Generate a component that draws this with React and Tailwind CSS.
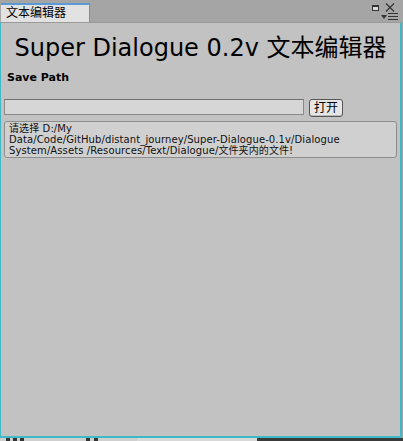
import React from "react"

const font = { fontFamily: '"DejaVu Sans", "Noto Sans CJK SC", sans-serif' }

export default function App() {
    return (
        <div className="w-[403px] h-[441px] bg-[#a5a5a5] flex flex-col overflow-hidden" style={font}>
            {/* TAB BAR */}
            <div className="h-[22px] flex items-end relative">
                <div className="w-[89px] h-[19px] ml-[1px] bg-[#e2e2e2] border-t-2 border-[#5b9bd5] border-r border-r-[#8a8a8a] text-[12px] text-black leading-[17px] pl-[5px]">
                    文本编辑器
                </div>
                <div className="absolute right-[8px] top-[3px] flex items-center gap-[6px]">
                    <div className="w-[7px] h-[6px] border border-[#333] border-t-2 bg-[#ddd]"></div>
                    <svg width="10" height="9" viewBox="0 0 10 9">
                        <path d="M1 0.5 L9 8.5 M9 0.5 L1 8.5" stroke="#333" strokeWidth="1.2" />
                    </svg>
                </div>
                <div className="absolute right-[5px] top-[13px] flex items-center gap-[1px]">
                    <svg width="6" height="4" viewBox="0 0 6 4"><path d="M0 0 H6 L3 4Z" fill="#333" /></svg>
                    <svg width="10" height="7" viewBox="0 0 10 7">
                        <path d="M0 0.5H10M0 3.5H10M0 6.5H10" stroke="#333" strokeWidth="1" />
                    </svg>
                </div>
            </div>

            {/* PANEL */}
            <div className="flex-1 flex flex-col bg-[#c2c2c2] border-l border-b-2 border-r-2 border-[#3fb8c8] border-t border-t-[#9a9a9a] mr-[1px]">
                <h1 className="text-center text-[24px] whitespace-nowrap text-black mt-[10px] leading-[30px]">
                    Super Dialogue 0.2v 文本编辑器
                </h1>
                <div className="text-[11px] font-bold text-black ml-[6px] mt-[8px] leading-[14px]">Save Path</div>

                <div className="flex items-center gap-[5px] ml-[3px] mt-[12px]">
                    <div className="w-[300px] h-[16px] bg-[#d6d6d6] border border-[#8a8a8a] border-t-[#6e6e6e]"></div>
                    <button className="w-[34px] h-[18px] mt-[2px] bg-[#e6e6e6] border border-[#555] rounded-[3px] text-[12px] leading-[14px] text-black shadow-[inset_0_-1px_0_#bbb]">
                        打开
                    </button>
                </div>

                <div className="mx-[3px] mt-[4px] h-[37px] bg-[#d0d0d0] border border-[#8e8e8e] rounded-[3px] pl-[4px] pt-[1px] text-[10px] leading-[11px] text-[#111] tracking-[0.1px]">
                    <div>请选择 D:/My</div>
                    <div>Data/Code/GitHub/distant_journey/Super-Dialogue-0.1v/Dialogue</div>
                    <div>System/Assets /Resources/Text/Dialogue/文件夹内的文件!</div>
                </div>
            </div>

            {/* BEHIND WINDOW STRIP */}
            <div className="h-[3px] flex">
                <div className="w-[50px] bg-[#cfcfcf] flex gap-[3px] pl-[6px]">
                    <div className="w-[4px] bg-[#333]"></div>
                    <div className="w-[4px] bg-[#333]"></div>
                    <div className="w-[4px] bg-[#333]"></div>
                </div>
                <div className="w-[87px] bg-[#cfcfcf] flex gap-[4px] pl-[36px]">
                    <div className="w-[4px] bg-[#333]"></div>
                    <div className="w-[4px] bg-[#333]"></div>
                </div>
                <div className="w-[120px] bg-[#d8d8d8]"></div>
                <div className="flex-1 bg-[#3a3a3a]"></div>
            </div>
        </div>
    )
}
